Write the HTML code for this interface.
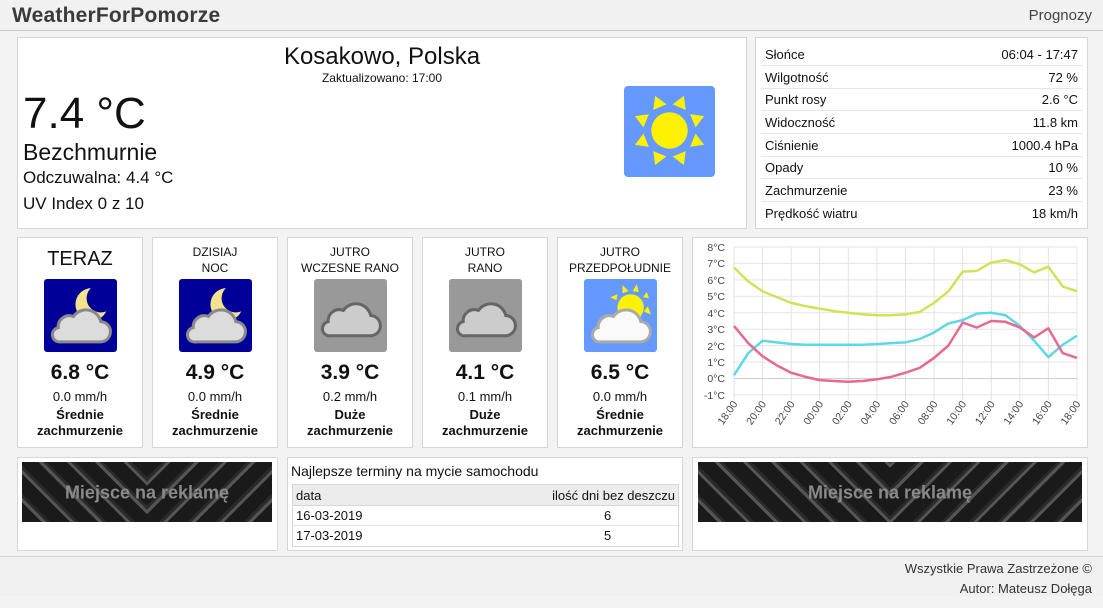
<!DOCTYPE html>
<html><head><meta charset="utf-8"><style>
*{box-sizing:border-box;margin:0;padding:0}
body{width:1103px;height:608px;background:#f3f3f3;font-family:"Liberation Sans",sans-serif;color:#111;position:relative;overflow:hidden}
.abs{position:absolute}
.card{position:absolute;background:#fff;border:1px solid #d6d6d6}
.hdr{left:0;top:0;width:1103px;height:31px;background:#f1f1f1;border-bottom:1px solid #c8c8c8}
.fc{position:absolute;text-align:center;width:100%}
.dt{position:absolute;left:5px;right:5px;font-size:13px;display:flex;justify-content:space-between;border-bottom:1px solid #e6e6e6;height:23px;line-height:23px;padding:0 4px}
.ad{position:absolute;background:#1a1a1a;overflow:hidden}
.ad .l,.ad .r{position:absolute;top:0;height:100%;width:50%}
.ad .l{left:0;background:repeating-linear-gradient(45deg,#1a1a1a 0 14px,#555 14px 17px,#2a2a2a 17px 20px)}
.ad .r{right:0;background:repeating-linear-gradient(-45deg,#1a1a1a 0 14px,#555 14px 17px,#2a2a2a 17px 20px)}
.ad span{position:absolute;left:0;right:0;top:50%;transform:translateY(-45%);text-align:center;font-weight:bold;font-size:18px;color:#8a8a8a}
</style></head><body>
<div class="abs hdr"></div>
<div class="abs" style="left:12px;top:4px;font-size:21px;font-weight:bold;color:#3a3a3a;letter-spacing:0.2px">WeatherForPomorze</div>
<div class="abs" style="right:11px;top:7px;font-size:15px;color:#444">Prognozy</div>

<div class="card" style="left:17px;top:37px;width:730px;height:192px">
 <div class="fc" style="top:5px;font-size:24px">Kosakowo, Polska</div>
 <div class="fc" style="top:33px;font-size:12px">Zaktualizowano: 17:00</div>
 <div class="abs" style="left:5px;top:51px;font-size:44px">7.4 °C</div>
 <div class="abs" style="left:5px;top:101px;font-size:23px">Bezchmurnie</div>
 <div class="abs" style="left:5px;top:130px;font-size:17px">Odczuwalna: 4.4 °C</div>
 <div class="abs" style="left:5px;top:156px;font-size:17px">UV Index 0 z 10</div>
 <svg class="abs" style="left:606px;top:48px" width="91" height="91" viewBox="0 0 90 90">
  <rect width="90" height="90" rx="4" fill="#6699ff"/>
  <circle cx="45" cy="44" r="18" fill="#fff200"/>
  <g fill="#fff200">
   <polygon points="38,19 52,19 45,7" transform="rotate(22.5 45 44)"/>
   <polygon points="38,19 52,19 45,7" transform="rotate(67.5 45 44)"/>
   <polygon points="38,19 52,19 45,7" transform="rotate(112.5 45 44)"/>
   <polygon points="38,19 52,19 45,7" transform="rotate(157.5 45 44)"/>
   <polygon points="38,19 52,19 45,7" transform="rotate(202.5 45 44)"/>
   <polygon points="38,19 52,19 45,7" transform="rotate(247.5 45 44)"/>
   <polygon points="38,19 52,19 45,7" transform="rotate(292.5 45 44)"/>
   <polygon points="38,19 52,19 45,7" transform="rotate(337.5 45 44)"/>
  </g>
 </svg>
</div>

<div class="card" style="left:755px;top:37px;width:333px;height:192px">
 <div class="dt" style="top:5px"><span>Słońce</span><span>06:04 - 17:47</span></div>
 <div class="dt" style="top:28px"><span>Wilgotność</span><span>72 %</span></div>
 <div class="dt" style="top:50px"><span>Punkt rosy</span><span>2.6 °C</span></div>
 <div class="dt" style="top:73px"><span>Widoczność</span><span>11.8 km</span></div>
 <div class="dt" style="top:96px"><span>Ciśnienie</span><span>1000.4 hPa</span></div>
 <div class="dt" style="top:118px"><span>Opady</span><span>10 %</span></div>
 <div class="dt" style="top:141px"><span>Zachmurzenie</span><span>23 %</span></div>
 <div class="dt" style="top:164px;border:none"><span>Prędkość wiatru</span><span>18 km/h</span></div>
</div>

<svg width="0" height="0" style="position:absolute">
 <defs>
  <path id="cl" d="M17 62 H55 A10 10 0 0 0 56 42 A15 15 0 0 0 29 37 A11 11 0 0 0 14 48 A7 7 0 0 0 17 62Z"/>
  <g id="moon"><rect width="72" height="72" rx="3" fill="#000099"/><circle cx="47" cy="25" r="16" fill="#f3e48c"/><circle cx="56" cy="19" r="14" fill="#000099"/><use href="#cl" fill="#dcdcdc" stroke="#8a8a8a" stroke-width="3"/></g>
 </defs>
</svg>

<div class="card" style="left:17px;top:237px;width:126px;height:211px">
 <div class="fc" style="top:10px;font-size:20px">TERAZ</div>
 <svg class="abs" style="left:26px;top:41px" width="73" height="73" viewBox="0 0 72 72"><use href="#moon"/></svg>
 <div class="fc" style="top:123px;font-size:21px;font-weight:bold">6.8 °C</div>
 <div class="fc" style="top:151px;font-size:13px">0.0 mm/h</div>
 <div class="fc" style="top:169px;font-size:13px;font-weight:bold;line-height:16px">Średnie<br>zachmurzenie</div>
</div>
<div class="card" style="left:152px;top:237px;width:126px;height:211px">
 <div class="fc" style="top:6px;font-size:12px;line-height:16px">DZISIAJ<br>NOC</div>
 <svg class="abs" style="left:26px;top:41px" width="73" height="73" viewBox="0 0 72 72"><use href="#moon"/></svg>
 <div class="fc" style="top:123px;font-size:21px;font-weight:bold">4.9 °C</div>
 <div class="fc" style="top:151px;font-size:13px">0.0 mm/h</div>
 <div class="fc" style="top:169px;font-size:13px;font-weight:bold;line-height:16px">Średnie<br>zachmurzenie</div>
</div>
<div class="card" style="left:287px;top:237px;width:126px;height:211px">
 <div class="fc" style="top:6px;font-size:12px;line-height:16px">JUTRO<br>WCZESNE RANO</div>
 <svg class="abs" style="left:26px;top:41px" width="73" height="73" viewBox="0 0 72 72"><rect width="72" height="72" rx="3" fill="#999999"/><use href="#cl" fill="#cccccc" stroke="#666" stroke-width="3" transform="translate(0 -6)"/></svg>
 <div class="fc" style="top:123px;font-size:21px;font-weight:bold">3.9 °C</div>
 <div class="fc" style="top:151px;font-size:13px">0.2 mm/h</div>
 <div class="fc" style="top:169px;font-size:13px;font-weight:bold;line-height:16px">Duże<br>zachmurzenie</div>
</div>
<div class="card" style="left:422px;top:237px;width:126px;height:211px">
 <div class="fc" style="top:6px;font-size:12px;line-height:16px">JUTRO<br>RANO</div>
 <svg class="abs" style="left:26px;top:41px" width="73" height="73" viewBox="0 0 72 72"><rect width="72" height="72" rx="3" fill="#999999"/><use href="#cl" fill="#cccccc" stroke="#666" stroke-width="3" transform="translate(0 -6)"/></svg>
 <div class="fc" style="top:123px;font-size:21px;font-weight:bold">4.1 °C</div>
 <div class="fc" style="top:151px;font-size:13px">0.1 mm/h</div>
 <div class="fc" style="top:169px;font-size:13px;font-weight:bold;line-height:16px">Duże<br>zachmurzenie</div>
</div>
<div class="card" style="left:557px;top:237px;width:126px;height:211px">
 <div class="fc" style="top:6px;font-size:12px;line-height:16px">JUTRO<br>PRZEDPOŁUDNIE</div>
 <svg class="abs" style="left:26px;top:41px" width="73" height="73" viewBox="0 0 72 72"><rect width="72" height="72" rx="3" fill="#6699ff"/>
  <g fill="#fff200"><circle cx="46" cy="28" r="13"/>
  <polygon points="38,6 44,12 38,14"/><polygon points="52,5 54,13 48,12"/><polygon points="62,13 64,19 58,18"/><polygon points="63,27 66,35 59,32"/><polygon points="26,18 33,15 32,21"/></g>
  <use href="#cl" fill="#fafafa" stroke="#aaa" stroke-width="3"/></svg>
 <div class="fc" style="top:123px;font-size:21px;font-weight:bold">6.5 °C</div>
 <div class="fc" style="top:151px;font-size:13px">0.0 mm/h</div>
 <div class="fc" style="top:169px;font-size:13px;font-weight:bold;line-height:16px">Średnie<br>zachmurzenie</div>
</div>

<div class="card" style="left:692px;top:237px;width:396px;height:211px"></div>
<svg class="abs" style="left:0;top:0" width="1103" height="608">
 <g stroke="#e3e3e3" stroke-width="1">
  <line x1="734" y1="247" x2="1077" y2="247"/><line x1="734" y1="263.4" x2="1077" y2="263.4"/><line x1="734" y1="279.9" x2="1077" y2="279.9"/><line x1="734" y1="296.3" x2="1077" y2="296.3"/><line x1="734" y1="312.8" x2="1077" y2="312.8"/><line x1="734" y1="329.2" x2="1077" y2="329.2"/><line x1="734" y1="345.6" x2="1077" y2="345.6"/><line x1="734" y1="362.1" x2="1077" y2="362.1"/><line x1="734" y1="394.9" x2="1077" y2="394.9"/>
  <line x1="734" y1="247" x2="734" y2="400"/><line x1="762.6" y1="247" x2="762.6" y2="400"/><line x1="791.2" y1="247" x2="791.2" y2="400"/><line x1="819.7" y1="247" x2="819.7" y2="400"/><line x1="848.3" y1="247" x2="848.3" y2="400"/><line x1="876.9" y1="247" x2="876.9" y2="400"/><line x1="905.5" y1="247" x2="905.5" y2="400"/><line x1="934.1" y1="247" x2="934.1" y2="400"/><line x1="962.7" y1="247" x2="962.7" y2="400"/><line x1="991.3" y1="247" x2="991.3" y2="400"/><line x1="1019.8" y1="247" x2="1019.8" y2="400"/><line x1="1048.4" y1="247" x2="1048.4" y2="400"/><line x1="1077" y1="247" x2="1077" y2="400"/>
 </g>
 <line x1="734" y1="378.5" x2="1077" y2="378.5" stroke="#cfcfcf"/>
 <g font-family="Liberation Sans,sans-serif" font-size="10.5" fill="#444" text-anchor="end">
  <text x="725" y="251">8°C</text><text x="725" y="267">7°C</text><text x="725" y="284">6°C</text><text x="725" y="300">5°C</text><text x="725" y="317">4°C</text><text x="725" y="333">3°C</text><text x="725" y="350">2°C</text><text x="725" y="366">1°C</text><text x="725" y="382">0°C</text><text x="725" y="399">-1°C</text>
 </g>
 <g font-family="Liberation Sans,sans-serif" font-size="10.5" fill="#444" text-anchor="end">
  <text transform="translate(738 404) rotate(-55)">18:00</text>
  <text transform="translate(766.6 404) rotate(-55)">20:00</text>
  <text transform="translate(795.2 404) rotate(-55)">22:00</text>
  <text transform="translate(823.7 404) rotate(-55)">00:00</text>
  <text transform="translate(852.3 404) rotate(-55)">02:00</text>
  <text transform="translate(880.9 404) rotate(-55)">04:00</text>
  <text transform="translate(909.5 404) rotate(-55)">06:00</text>
  <text transform="translate(938.1 404) rotate(-55)">08:00</text>
  <text transform="translate(966.7 404) rotate(-55)">10:00</text>
  <text transform="translate(995.3 404) rotate(-55)">12:00</text>
  <text transform="translate(1023.8 404) rotate(-55)">14:00</text>
  <text transform="translate(1052.4 404) rotate(-55)">16:00</text>
  <text transform="translate(1081 404) rotate(-55)">18:00</text>
 </g>
 <g transform="translate(734 378.5) scale(14.29 -16.44)" fill="none" stroke-width="2.5" stroke-linejoin="round">
  <polyline vector-effect="non-scaling-stroke" stroke="#d4e157" points="0,6.75 1,5.9 2,5.3 3,4.95 4,4.6 5,4.4 6,4.25 7,4.1 8,4.0 9,3.9 10,3.85 11,3.85 12,3.9 13,4.05 14,4.6 15,5.3 16,6.5 17,6.55 18,7.05 19,7.2 20,6.95 21,6.45 22,6.8 23,5.6 24,5.3"/>
  <polyline vector-effect="non-scaling-stroke" stroke="#5fd8e6" points="0,0.2 1,1.55 2,2.3 3,2.2 4,2.1 5,2.05 6,2.05 7,2.05 8,2.05 9,2.05 10,2.1 11,2.15 12,2.2 13,2.4 14,2.8 15,3.35 16,3.55 17,3.95 18,4.0 19,3.85 20,3.2 21,2.3 22,1.3 23,2.05 24,2.6"/>
  <polyline vector-effect="non-scaling-stroke" stroke="#e8688f" points="0,3.2 1,2.15 2,1.35 3,0.8 4,0.35 5,0.1 6,-0.1 7,-0.15 8,-0.2 9,-0.15 10,-0.05 11,0.1 12,0.35 13,0.65 14,1.25 15,2.0 16,3.4 17,3.1 18,3.5 19,3.45 20,3.1 21,2.5 22,3.05 23,1.55 24,1.25"/>
 </g>
</svg>

<div class="card" style="left:17px;top:457px;width:261px;height:94px"></div>
<div class="ad" style="left:22px;top:462px;width:250px;height:60px"><div class="l"></div><div class="r"></div><span>Miejsce na reklamę</span></div>
<div class="card" style="left:287px;top:457px;width:396px;height:94px">
 <div class="abs" style="left:3px;top:5px;font-size:14px">Najlepsze terminy na mycie samochodu</div>
 <div class="abs" style="left:4px;top:26px;width:387px;height:63px;border:1px solid #d6d6d6;font-size:13px">
  <div style="background:#ececec;height:21px;line-height:21px;padding:0 3px;display:flex;justify-content:space-between;border-bottom:1px solid #d6d6d6"><span>data</span><span>ilość dni bez deszczu</span></div>
  <div style="height:20px;line-height:20px;padding:0 3px;position:relative;border-bottom:1px solid #e3e3e3">16-03-2019<span style="position:absolute;left:311px">6</span></div>
  <div style="height:20px;line-height:20px;padding:0 3px;position:relative">17-03-2019<span style="position:absolute;left:311px">5</span></div>
 </div>
</div>
<div class="card" style="left:692px;top:457px;width:396px;height:94px"></div>
<div class="ad" style="left:698px;top:462px;width:384px;height:60px"><div class="l"></div><div class="r"></div><span>Miejsce na reklamę</span></div>

<div class="abs" style="left:0;top:556px;width:1103px;height:40px;background:#f0f0f0;border-top:1px solid #d0d0d0"></div>
<div class="abs" style="right:11px;top:559px;font-size:13px;color:#333;text-align:right;line-height:20px">Wszystkie Prawa Zastrzeżone ©<br>Autor: Mateusz Dołęga</div>
</body></html>
